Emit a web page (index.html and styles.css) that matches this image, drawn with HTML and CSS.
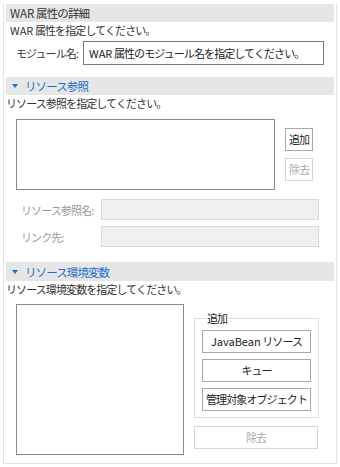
FILE: index.html
```html
<!DOCTYPE html>
<html lang="ja">
<head>
    <meta charset="UTF-8">
    <title>WAR 属性の詳細</title>
    <link rel="stylesheet" href="styles.css">
</head>
<body>
    <div class="frame">
        <!-- WAR attributes -->
        <div class="section-head"><span class="latin">WAR</span> 属性の詳細</div>
        <div class="desc first"><span class="latin">WAR</span> 属性を指定してください。</div>
        <div class="module-row">
            <span class="module-label">モジュール名:</span>
            <div class="text-input"><span class="latin">WAR</span> 属性のモジュール名を指定してください。</div>
        </div>

        <!-- Resource references -->
        <div class="section-head blue"><span class="tri"></span>リソース参照</div>
        <div class="desc">リソース参照を指定してください。</div>
        <div class="ref-row">
            <div class="list ref-list"></div>
            <div class="side-buttons">
                <div class="btn">追加</div>
                <div class="btn disabled">除去</div>
            </div>
        </div>
        <div class="field-row">
            <span class="field-label">リソース参照名:</span>
            <div class="field-input"></div>
        </div>
        <div class="field-row">
            <span class="field-label">リンク先:</span>
            <div class="field-input"></div>
        </div>

        <!-- Resource env entries -->
        <div class="section-head blue env-head"><span class="tri"></span>リソース環境変数</div>
        <div class="desc">リソース環境変数を指定してください。</div>
        <div class="env-row">
            <div class="list env-list"></div>
            <div class="env-side">
                <fieldset class="add-group">
                    <legend>追加</legend>
                    <div class="btn wide"><span class="latin">JavaBean</span> リソース</div>
                    <div class="btn wide">キュー</div>
                    <div class="btn wide">管理対象オブジェクト</div>
                </fieldset>
                <div class="btn remove disabled">除去</div>
            </div>
        </div>
    </div>
</body>
</html>
```

FILE: styles.css
```css
body {
    margin: 0;
    background: #fff;
    color: #333;
    font-family: "Noto Sans CJK JP", "Noto Sans", sans-serif;
    font-size: 11px;
    letter-spacing: -0.9px;
    white-space: nowrap;
}
.latin {
    letter-spacing: 0;
}
.frame {
    margin: 3px 3px 0 3px;
    height: 461px;
    box-sizing: border-box;
    border: 1px solid #e3e3e3;
    border-top: none;
    padding: 1px 2px 0 2px;
}
.section-head {
    background: #e6e6e6;
    height: 18px;
    line-height: 18px;
    padding-left: 4px;
    color: #333;
    font-size: 11.5px;
}
.section-head.blue {
    color: #1b6fcc;
    padding-left: 6px;
    display: flex;
    align-items: center;
}
.tri {
    width: 0;
    height: 0;
    border-left: 3px solid transparent;
    border-right: 3px solid transparent;
    border-top: 4px solid #1b6fcc;
    margin-right: 7px;
}
.desc {
    height: 17px;
    line-height: 17px;
}
.desc.first {
    padding-left: 4px;
}
.module-row {
    display: flex;
    align-items: center;
    margin: 2px 0 12px 10px;
}
.module-label {
    width: 67px;
    flex-shrink: 0;
}
.text-input {
    width: 241px;
    height: 24px;
    line-height: 22px;
    box-sizing: border-box;
    border: 1px solid #7a7a7a;
    padding-left: 5px;
    color: #222;
    overflow: hidden;
}
.ref-row {
    display: flex;
    margin: 7px 0 0 10px;
}
.list {
    box-sizing: border-box;
    border: 1px solid #8a8a8f;
    background: #fff;
    flex-shrink: 0;
}
.ref-list {
    width: 259px;
    height: 71px;
}
.side-buttons {
    display: flex;
    flex-direction: column;
    gap: 7px;
    margin: 9px 0 0 10px;
}
.btn {
    box-sizing: border-box;
    height: 23px;
    line-height: 21px;
    border: 1px solid #a8a8a8;
    text-align: center;
    padding: 0 3px;
    color: #222;
    background: #fff;
}
.btn.disabled {
    color: #aaa;
    border-color: #d6d6d6;
}
.field-row {
    display: flex;
    align-items: center;
    margin: 9px 0 0 15px;
    color: #999;
}
.field-row + .field-row {
    margin-top: 6px;
}
.field-label {
    width: 80px;
    flex-shrink: 0;
}
.field-input {
    width: 218px;
    height: 21px;
    box-sizing: border-box;
    border: 1px solid #dadada;
    background: #f0f0f0;
}
.env-head {
    margin-top: 15px;
    height: 19px;
}
.env-row {
    display: flex;
    margin: 6px 0 0 10px;
}
.env-list {
    width: 168px;
    height: 151px;
}
.env-side {
    margin-left: 10px;
    width: 125px;
}
.add-group {
    margin: 6px 0 0 0;
    padding: 4px 7px 6px 7px;
    border: 1px solid #dcdcdc;
    display: flex;
    flex-direction: column;
    gap: 6px;
}
.add-group legend {
    padding: 0 2px;
    margin-left: 3px;
    color: #222;
}
.btn.wide {
    width: 109px;
    padding: 0;
}
.btn.remove {
    margin-top: 8px;
    width: 124px;
}
```
